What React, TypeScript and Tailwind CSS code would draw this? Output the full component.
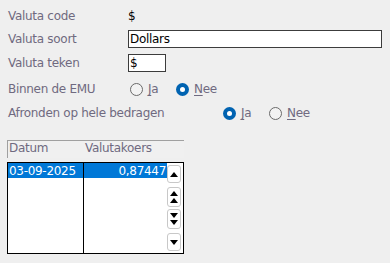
import React from "react";

function Radio({ checked, label }: { checked: boolean; label: string }) {
  return (
    <div className="flex items-center gap-[5px]">
      {checked ? (
        <span className="w-[13px] h-[13px] rounded-full bg-[#0063b1] flex items-center justify-center">
          <span className="w-[5px] h-[5px] rounded-full bg-white" />
        </span>
      ) : (
        <span className="w-[13px] h-[13px] rounded-full border border-[#6a6a6a] bg-[#f3f3f3]" />
      )}
      <span className="text-[#6f6a80]">
        <span className="underline underline-offset-2">{label[0]}</span>
        {label.slice(1)}
      </span>
    </div>
  );
}

function ScrollBtn({ arrows }: { arrows: ("up" | "down")[] }) {
  return (
    <div className="w-[14px] rounded-[3px] border border-[#c8c8c8] bg-white flex flex-col items-center justify-center py-[3px] gap-[2px]">
      {arrows.map((a, i) =>
        a === "up" ? (
          <span key={i} className="w-0 h-0 border-l-[4px] border-r-[4px] border-b-[5px] border-l-transparent border-r-transparent border-b-black" />
        ) : (
          <span key={i} className="w-0 h-0 border-l-[4px] border-r-[4px] border-t-[5px] border-l-transparent border-r-transparent border-t-black" />
        )
      )}
    </div>
  );
}

export default function App() {
  return (
    <div
      className="w-[390px] h-[263px] bg-[#efefef] text-[12px] tracking-[-0.3px] text-[#6f6a80] pl-[8px] pt-[8px]"
      style={{ fontFamily: '"DejaVu Sans", Verdana, sans-serif' }}
    >
      <div className="flex items-center h-[15px]">
        <span className="w-[120px]">Valuta code</span>
        <span className="text-black">$</span>
      </div>
      <div className="flex items-center h-[18px] mt-[7px]">
        <span className="w-[120px]">Valuta soort</span>
        <div className="w-[254px] h-[18px] border border-[#3c3c3c] bg-white text-black flex items-center pl-[1px]">
          Dollars
        </div>
      </div>
      <div className="flex items-center h-[18px] mt-[6px]">
        <span className="w-[120px]">Valuta teken</span>
        <div className="w-[38px] h-[18px] border border-[#3c3c3c] bg-white text-black flex items-center pl-[1px]">
          $
        </div>
      </div>
      <div className="flex items-center h-[16px] mt-[9px]">
        <span className="w-[122px]">Binnen de EMU</span>
        <div className="w-[46px]">
          <Radio checked={false} label="Ja" />
        </div>
        <Radio checked={true} label="Nee" />
      </div>
      <div className="flex items-center h-[16px] mt-[8px]">
        <span className="w-[215px]">Afronden op hele bedragen</span>
        <div className="w-[46px]">
          <Radio checked={true} label="Ja" />
        </div>
        <Radio checked={false} label="Nee" />
      </div>

      <div className="ml-[-1px] mt-[19px] w-[177px]">
        <div className="h-[18px] border-t border-l border-[#a0a0a0] bg-[#f0f0f0] flex items-end pb-[1px]">
          <span className="w-[77px] pl-[1px]">Datum</span>
          <span>Valutakoers</span>
        </div>
        <div className="mt-[4px] h-[92px] border border-black bg-white flex">
          <div className="w-[76px] border-r border-black">
            <div className="h-[15px] bg-[#0078d7] text-white flex items-center pl-[1px]">03-09-2025</div>
          </div>
          <div className="flex-1 overflow-hidden">
            <div className="h-[15px] bg-[#0078d7] text-white flex items-center justify-end pr-[1px]">0,87447</div>
          </div>
          <div className="w-[16px] flex flex-col items-start pt-[2px] pb-[2px] gap-[2px]">
            <div className="h-[18px] flex">
              <ScrollBtn arrows={["up"]} />
            </div>
            <div className="h-[20px] flex mt-[2px]">
              <ScrollBtn arrows={["up", "up"]} />
            </div>
            <div className="h-[20px] flex">
              <ScrollBtn arrows={["down", "down"]} />
            </div>
            <div className="h-[18px] flex mt-[2px]">
              <ScrollBtn arrows={["down"]} />
            </div>
          </div>
        </div>
      </div>
    </div>
  );
}
